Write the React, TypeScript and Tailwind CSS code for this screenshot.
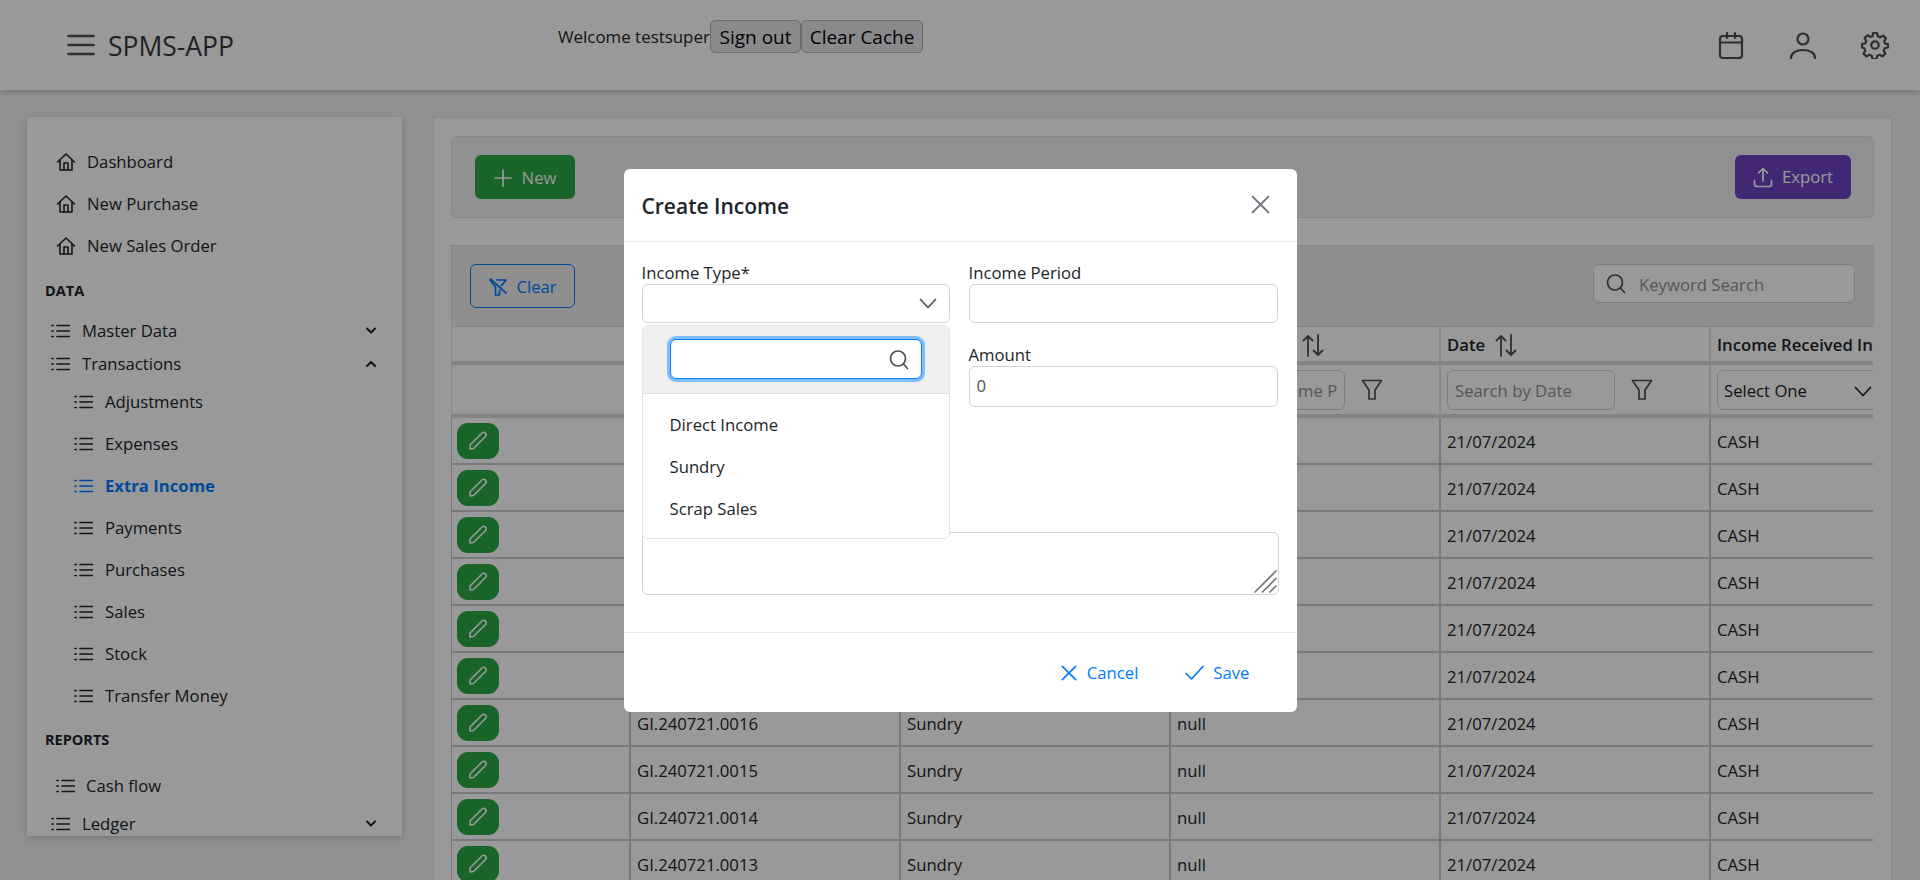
import React from "react";

type IP = { className?: string };
const S = ({ w, h, vw, vh, sw = 1.5, className, children }: { w: number; h: number; vw?: number; vh?: number; sw?: number; className?: string; children: React.ReactNode }) => (
  <svg width={w} height={h} viewBox={`0 0 ${vw ?? w} ${vh ?? h}`} fill="none" stroke="currentColor" strokeWidth={sw} strokeLinecap="round" strokeLinejoin="round" className={`shrink-0 ${className ?? ""}`}>
    {children}
  </svg>
);

const Home = ({ className }: IP) => (
  <S w={20} h={20} sw={1.6} className={className}>
    <path d="M1.500 10 10 2l8.500 8" />
    <path d="M4 8v10h12V8" />
    <path d="M8 18v-7h4v7" />
  </S>
);
const ListI = ({ className }: IP) => (
  <S w={19} h={16} sw={1.7} className={className}>
    <path d="M6 2.500h12.500M6 8h12.500M6 13.500h12.500" />
    <path d="M1 2.500h1.200M1 8h1.200M1 13.500h1.200" />
  </S>
);
const Chev = ({ up, className }: IP & { up?: boolean }) => (
  <S w={10} h={7} sw={2} className={className}>
    {up ? <path d="M1 6l4-4 4 4" /> : <path d="M1 1.500l4 4 4-4" />}
  </S>
);
const ChevBig = ({ className }: IP) => (
  <S w={18} h={11} sw={1.7} className={className}>
    <path d="M1.500 1.500 9 9.500l7.500-8" />
  </S>
);
const Search = ({ className }: IP) => (
  <S w={20} h={21} sw={1.7} className={className}>
    <circle cx="9" cy="9.500" r="7.500" />
    <path d="m14.500 15 4 4.500" />
  </S>
);
const Funnel = ({ className }: IP) => (
  <S w={22} h={22} sw={1.7} className={className}>
    <path d="M1.500 1.500h19L14 11v9H8v-9z" />
  </S>
);
const Sort = ({ className }: IP) => (
  <S w={22} h={23} sw={1.8} className={className}>
    <path d="M6 22V2M1.500 6.500 6 2l4.500 4.500" />
    <path d="M16 1v20M11.500 16.500 16 21l4.500-4.500" />
  </S>
);
const Pencil = ({ className }: IP) => (
  <S w={20} h={20} sw={1.6} className={className}>
    <path d="M2 14.500 14 2.500c1-1 2.200-1 3.100-.1l.5.5c.9.9.9 2.100-.1 3.100L5.500 18l-3.500.5z" transform="translate(0 -.5)" />
  </S>
);
const Times = ({ className, s = 18 }: IP & { s?: number }) => (
  <S w={s} h={s} vw={18} vh={18} sw={1.8} className={className}>
    <path d="M1.500 1.500l15 15M16.500 1.500l-15 15" />
  </S>
);

const sidebarSub = ["Adjustments", "Expenses", "Extra Income", "Payments", "Purchases", "Sales", "Stock", "Transfer Money"];
const rows = ["0022", "0021", "0020", "0019", "0018", "0017", "0016", "0015", "0014", "0013"];
const td = "h-[47px] border-b-2 border-r-2 border-[#c8cbce] px-[6px] align-middle whitespace-nowrap";
const tdText = `${td} pt-[2px]`;
const th1 = "h-[39px] border-y border-b-4 border-r-2 border-[#dee2e6] border-b-[#dcdcdc] px-[6px] pt-[2px] font-semibold";
const th2 = "h-[53px] border-b-4 border-r-2 border-[#dee2e6] border-b-[#dcdcdc] px-[6px] pt-[1px] font-normal";

export default function App() {
  return (
    <div className="relative h-[880px] w-[1920px] overflow-hidden bg-[#eef0f2] font-['Open_Sans',sans-serif] text-[16.7px] leading-[24px] text-[#212529]">
      {/* header */}
      <header className="relative z-10 flex h-[90px] items-center bg-white pl-[67px] pr-[31px] shadow-[0_2px_6px_rgba(0,0,0,0.2)]">
        <S w={28} h={22} sw={2.6} className="text-[#495057]">
          <path d="M1.500 2h25M1.500 11h25M1.500 20h25" />
        </S>
        <span className="ml-[13px] pt-[2px] text-[26.500px] leading-[30px] text-[#343a40]">SPMS-APP</span>
        <div className="ml-[324px] flex items-center self-start pt-[20px]">
          <span className="w-[152px] whitespace-nowrap text-[16.900px] text-[#212529]">Welcome testsuper</span>
          <button className="h-[33px] w-[91px] rounded-[5px] border border-[#b4b4b4] bg-[#e6e6ea] text-[19px] text-black">Sign out</button>
          <button className="h-[33px] w-[122px] rounded-[5px] border border-[#b4b4b4] bg-[#e6e6ea] text-[19px] text-black">Clear Cache</button>
        </div>
        <div className="ml-auto flex items-center gap-[44px] text-[#495057]">
          <S w={28} h={28} sw={2.2}>
            <rect x="3" y="5" width="22" height="22" rx="3" />
            <path d="M3 11.500h22M10 2v5M18 2v5" />
          </S>
          <S w={28} h={28} sw={2.2}>
            <circle cx="14" cy="8" r="5.500" />
            <path d="M2 27c0-5 5-8 12-8s12 3 12 8" />
          </S>
          <S w={28} h={28} sw={2.2}>
            <circle cx="14" cy="14" r="3.700" />
            <path d="M12 2h4l.8 3.300 2.300 1 3-1.700 2.800 2.800-1.700 3 1 2.300L27 13v3.500l-3.300.8-1 2.300 1.700 3-2.800 2.800-3-1.700-2.300 1-.8 3.300h-4l-.8-3.300-2.300-1-3 1.700-2.800-2.800 1.700-3-1-2.300L1 16.500V13l3.300-.6 1-2.300-1.700-3 2.800-2.800 3 1.700 2.300-1z" />
          </S>
        </div>
      </header>

      <div className="flex items-start pl-[27px] pt-[27px]">
        {/* sidebar */}
        <aside className="h-[719px] w-[375px] shrink-0 overflow-hidden bg-white pt-[24px] shadow-[0_2px_6px_rgba(0,0,0,0.18)]">
          {["Dashboard", "New Purchase", "New Sales Order"].map((t) => (
            <div key={t} className="flex h-[42px] items-center gap-[11px] pl-[29px]">
              <Home />
              <span>{t}</span>
            </div>
          ))}
          <div className="flex h-[46px] items-center pl-[18px] pt-[2px] text-[14.500px] font-bold">DATA</div>
          <div className="mt-[1px] flex h-[33px] items-center pl-[24px] pr-[26px]">
            <ListI />
            <span className="ml-[12px]">Master Data</span>
            <Chev className="ml-auto" />
          </div>
          <div className="mb-[1px] flex h-[33px] items-center pl-[24px] pr-[26px]">
            <ListI />
            <span className="ml-[12px]">Transactions</span>
            <Chev up className="ml-auto" />
          </div>
          {sidebarSub.map((t) => {
            const on = t === "Extra Income";
            return (
              <div key={t} className={`flex h-[42px] items-center gap-[12px] pl-[47px] ${on ? "font-bold text-[#007bff]" : ""}`}>
                <ListI />
                <span>{t}</span>
              </div>
            );
          })}
          <div className="flex h-[46px] items-center pl-[18px] text-[14.500px] font-bold">REPORTS</div>
          <div className="mt-[2px] flex h-[42px] items-center gap-[11px] pl-[29px]">
            <ListI />
            <span>Cash flow</span>
          </div>
          <div className="flex h-[33px] items-center pl-[24px] pr-[26px]">
            <ListI />
            <span className="ml-[12px]">Ledger</span>
            <Chev className="ml-auto" />
          </div>
        </aside>

        {/* main card */}
        <main className="ml-[31px] h-[800px] w-[1459px] shrink-0 border border-[#e2e4e6] bg-white px-[17px] pt-[18px]">
          <div className="flex h-[82px] items-center justify-between rounded-[6px] border border-[#dee2e6] bg-[#f1f1f1] pl-[23px] pr-[22px]">
            <button className="flex h-[44px] w-[100px] items-center justify-center gap-[10px] rounded-[6px] bg-[#28a745] pt-[1px] text-white">
              <S w={18} h={18} sw={1.7}><path d="M9 1v16M1 9h16" /></S>
              New
            </button>
            <button className="flex h-[44px] w-[116px] items-center justify-center gap-[9px] rounded-[6px] bg-[#6f42c1] text-white">
              <S w={20} h={21} sw={1.7}>
                <path d="M10 14V1.500M5.500 6 10 1.500 14.500 6" />
                <path d="M1.500 13.500V17c0 1.500 1 2.500 2.500 2.500h12c1.500 0 2.500-1 2.500-2.500v-3.500" />
              </S>
              Export
            </button>
          </div>

          <div className="mt-[27px] flex h-[81px] items-start justify-between border border-b-0 border-[#dee2e6] bg-[#eeeeee] pl-[18px] pr-[18px] pt-[18px]">
            <button className="flex h-[44px] w-[105px] items-center justify-center gap-[8px] rounded-[6px] border border-[#007bff] pt-[1px] text-[#007bff]">
              <S w={20} h={20} sw={1.7}>
                <path d="M9 3h9l-4.500 5.500" />
                <path d="M2 3l5.500 7v8h4v-5" />
                <path d="M2.500 2 18 16" />
              </S>
              Clear
            </button>
            <div className="flex h-[39px] w-[262px] items-center gap-[13px] rounded-[6px] border border-[#ced4da] bg-white pl-[12px] text-[#8a9198]">
              <Search className="text-[#495057]" />
              <span className="pt-[2px]">Keyword Search</span>
            </div>
          </div>

          <div className="w-[1422px] overflow-hidden">
            <table className="w-[1692px] table-fixed border-separate border-spacing-0 text-left">
              <colgroup>
                <col className="w-[180px]" />
                <col className="w-[270px]" />
                <col className="w-[270px]" />
                <col className="w-[270px]" />
                <col className="w-[270px]" />
                <col className="w-[432px]" />
              </colgroup>
              <thead>
                <tr>
                  <th className={`${th1} border-l`} />
                  <th className={th1} />
                  <th className={th1} />
                  <th className={th1}>
                    <div className="pl-[125px]"><Sort className="text-[#495057]" /></div>
                  </th>
                  <th className={th1}>
                    <div className="flex items-center gap-[10px]">Date <Sort className="text-[#495057]" /></div>
                  </th>
                  <th className={`${th1} border-r-0`}>Income Received In</th>
                </tr>
                <tr>
                  <th className={`${th2} border-l`} />
                  {[0, 1, 2, 3].map((i) => (
                    <th key={i} className={th2}>
                      <div className="flex items-center gap-[16px]">
                        <div className="flex h-[40px] w-[168px] items-center rounded-[6px] border border-[#ced4da] bg-white px-[7px] pt-[2px] text-[#8a9198]">
                          <span className="block w-full overflow-hidden whitespace-nowrap">
                            {i === 2 ? "Search by Income Period" : i === 3 ? "Search by Date" : ""}
                          </span>
                        </div>
                        <Funnel className="text-[#495057]" />
                      </div>
                    </th>
                  ))}
                  <th className={`${th2} border-r-0`}>
                    <div className="flex h-[40px] w-[165px] items-center justify-between rounded-[6px] border border-[#ced4da] bg-white pl-[6px] pr-[9px] pt-[2px]">
                      Select One <ChevBig className="text-[#212529]" />
                    </div>
                  </th>
                </tr>
              </thead>
              <tbody>
                {rows.map((r) => (
                  <tr key={r}>
                    <td className={`${td} border-l !px-[5px]`}>
                      <button className="flex h-[36px] w-[42px] items-center justify-center rounded-[11px] bg-[#28a745] text-white">
                        <Pencil />
                      </button>
                    </td>
                    <td className={tdText}>GI.240721.{r}</td>
                    <td className={tdText}>Sundry</td>
                    <td className={tdText}>null</td>
                    <td className={tdText}>21/07/2024</td>
                    <td className={`${tdText} border-r-0`}>CASH</td>
                  </tr>
                ))}
              </tbody>
            </table>
          </div>
        </main>
      </div>

      {/* modal overlay */}
      <div className="absolute inset-0 z-20 flex items-center justify-center bg-black/40">
        <div className="relative h-[543px] w-[673px] rounded-[6px] bg-white">
          <div className="flex h-[73px] items-center justify-between border-b border-[#e9ecef] pl-[18px] pr-[27px]">
            <h2 className="pt-[2px] text-[21px] font-semibold text-[#212529]">Create Income</h2>
            <Times className="mb-[1px] text-[#6c757d]" s={19} />
          </div>

          <div className="px-[18px] pt-[19px]">
            <div className="grid grid-cols-[308px_309px] gap-x-[19px]">
              <label className="h-[23px]">Income Type*</label>
              <label className="h-[23px]">Income Period</label>
              <div className="flex h-[39px] items-center justify-end rounded-[6px] border border-[#ced4da] pr-[12px] text-[#495057]">
                <ChevBig />
              </div>
              <div className="h-[39px] rounded-[6px] border border-[#ced4da]" />
              <div />
              <div className="mt-[20px]">
                <label className="block h-[23px]">Amount</label>
                <div className="flex h-[41px] items-center rounded-[6px] border border-[#ced4da] pl-[7px] text-[#495057]">0</div>
              </div>
            </div>
            <div className="relative mt-[125px] h-[63px] rounded-[6px] border border-[#ced4da]">
              <S w={24} h={24} sw={1.7} className="absolute bottom-[1px] right-[1px] text-[#767676]">
                <path d="M2 23 23 2M9.500 23 23 9.500M17 23l6-6" />
              </S>
            </div>
          </div>

          {/* dropdown panel */}
          <div className="absolute left-[18px] top-[156px] h-[214px] w-[308px] overflow-hidden rounded-[6px] border border-[#dee2e6] bg-white">
            <div className="flex h-[68px] items-center border-b border-[#dee2e6] bg-[#efefef] pl-[27px]">
              <div className="flex h-[40px] w-[252px] items-center justify-end rounded-[6px] border border-[#007bff] bg-white pr-[12px] text-[#495057] shadow-[0_0_0_3px_#80bdff]">
                <Search />
              </div>
            </div>
            <div className="pt-[10px]">
              {["Direct Income", "Sundry", "Scrap Sales"].map((t) => (
                <div key={t} className="flex h-[42px] items-center pl-[27px]">{t}</div>
              ))}
            </div>
          </div>

          <div className="absolute bottom-0 left-0 right-0 flex h-[80px] items-center justify-end border-t border-[#e9ecef] pr-[47px] pt-[1px] text-[#007bff]">
            <button className="flex items-center gap-[10px]">
              <Times s={16} />
              Cancel
            </button>
            <button className="ml-[47px] flex items-center gap-[9px]">
              <S w={19} h={15} sw={1.7}><path d="M1 8.500 6.500 14 18 1.500" /></S>
              Save
            </button>
          </div>
        </div>
      </div>
    </div>
  );
}
